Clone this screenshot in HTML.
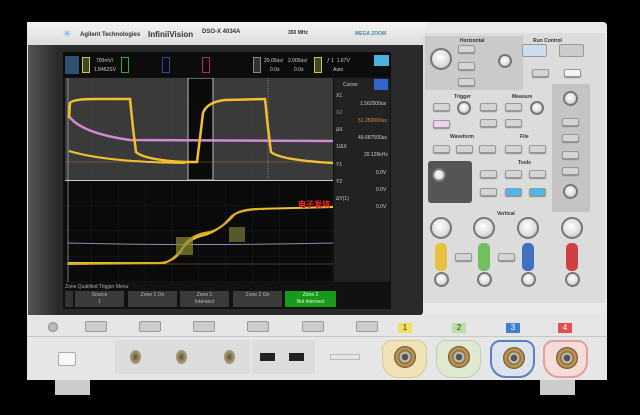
<!DOCTYPE html><html><head><style>
*{margin:0;padding:0;box-sizing:border-box}
body{width:640px;height:415px;background:#000;position:relative;overflow:hidden;font-family:"Liberation Sans",sans-serif}
.a{position:absolute}
.t{font-size:5px;color:#ccc;white-space:nowrap}
.btn{position:absolute;background:#d4d4d4;border:1px solid #999;border-radius:2px;width:17px;height:8px;box-shadow:0 1px 1px #888}
.knob{position:absolute;border-radius:50%;background:radial-gradient(circle at 45% 40%,#fff,#ddd 60%,#999);border:2px solid #777}
.sk{position:absolute;top:291px;height:16px;width:49px;background:#3a3a3a;color:#bbb;font-size:5px;text-align:center;line-height:7px;padding-top:1px}
.ub{position:absolute;top:321px;width:22px;height:11px;background:#ccc;border:1px solid #999;border-radius:2px}
.bnc{position:absolute;top:340px;width:45px;height:38px;border-radius:10px 10px 16px 16px}
.bnc i{position:absolute;left:11px;top:5px;width:22px;height:22px;border-radius:50%;background:radial-gradient(circle,#555 20%,#ddd 25%,#8a6d3b 40%,#c8a060 55%,#6a5020 70%)}
</style></head><body>
<div class="a" style="left:27px;top:22px;width:580px;height:358px;background:#e9e9e9;border-radius:4px"></div>
<div class="a" style="left:27px;top:22px;width:400px;height:23px;background:linear-gradient(#f4f4f4,#dcdcdc)"></div>
<div class="a t" style="left:63px;top:29px;color:#6af;font-size:10px">✳</div>
<div class="a t" style="left:80px;top:32px;color:#333;font-size:6px;font-weight:bold">Agilent Technologies</div>
<div class="a t" style="left:148px;top:30px;color:#333;font-size:8px;font-weight:bold">InfiniiVision</div>
<div class="a t" style="left:202px;top:29px;color:#333;font-size:6px;font-weight:bold">DSO-X 4034A</div>
<div class="a t" style="left:288px;top:30px;color:#333;font-size:5px;font-weight:bold">350 MHz</div>
<div class="a t" style="left:355px;top:31px;color:#48a;font-size:5px;font-weight:bold">MEGA ZOOM</div>
<div class="a" style="left:28px;top:45px;width:395px;height:270px;background:#2a2a2a;border-radius:0 0 3px 3px"></div>
<div class="a" style="left:28px;top:45px;width:30px;height:270px;background:linear-gradient(90deg,#555,#2a2a2a)"></div>
<div class="a" style="left:63px;top:52px;width:328px;height:257px;background:#111"></div>
<div class="a" style="left:63px;top:52px;width:328px;height:25px;background:#0c0c0c"></div>
<div class="a" style="left:65px;top:56px;width:14px;height:18px;background:#2f5070"></div>
<div class="a" style="left:82px;top:57px;width:8px;height:16px;border:1px solid #cc3;background:#443"></div>
<div class="a t" style="left:96px;top:58px">700mV/</div><div class="a t" style="left:94px;top:67px">1.8462SV</div>
<div class="a" style="left:121px;top:57px;width:8px;height:16px;border:1px solid #3a3"></div>
<div class="a" style="left:162px;top:57px;width:8px;height:16px;border:1px solid #34a"></div>
<div class="a" style="left:202px;top:57px;width:8px;height:16px;border:1px solid #a34"></div>
<div class="a" style="left:253px;top:57px;width:8px;height:16px;border:1px solid #888;background:#333"></div>
<div class="a t" style="left:264px;top:58px">20.00us/</div><div class="a t" style="left:270px;top:67px">0.0s</div>
<div class="a t" style="left:288px;top:58px">2.000us/</div><div class="a t" style="left:294px;top:67px">0.0s</div>
<div class="a" style="left:314px;top:57px;width:8px;height:16px;border:1px solid #cc3;background:#443"></div>
<div class="a t" style="left:327px;top:58px">ƒ 1 &nbsp;1.67V</div><div class="a t" style="left:333px;top:67px">Auto</div>
<div class="a" style="left:374px;top:55px;width:15px;height:11px;background:#4ab0e0"></div>
<svg class="a" style="left:65px;top:78px" width="268" height="204">
<defs><pattern id="g" width="26.8" height="25.5" patternUnits="userSpaceOnUse"><path d="M26.8 0V25.5H0" fill="none" stroke="#444" stroke-width=".6" stroke-dasharray="1 1"/></pattern></defs>
<rect width="268" height="102" fill="#3a3a3a"/><rect width="268" height="102" fill="url(#g)"/>
<rect x="123" y="0" width="25" height="102" fill="#0b0b0b" stroke="#bbb"/>
<rect y="103" width="268" height="101" fill="#0a0a0a"/><rect y="103" width="268" height="101" fill="url(#g)"/>
<line x1="0" y1="102.5" x2="268" y2="102.5" stroke="#ccc"/>
<line x1="3" y1="0" x2="3" y2="204" stroke="#ccc" stroke-width=".6"/>
<line x1="0" y1="84" x2="268" y2="84" stroke="#a64" stroke-width=".6"/>
<line x1="0" y1="186" x2="268" y2="186" stroke="#a64" stroke-width=".6"/>
<line x1="203" y1="0" x2="203" y2="102" stroke="#cb8" stroke-width=".5" stroke-dasharray="1 1"/>
<path d="M3 37 Q15 55 65 62 L268 63" stroke="#d08ad0" stroke-width="2.5" fill="none"/>
<path d="M4 40 L5 25 Q8 21 30 21 L65 21 L68 50 L71 74 Q80 82 120 84 L132 84 L135 60 L138 35 Q142 24 160 22 L200 21 L203 50 L206 74 Q215 82 268 85" stroke="#f0c030" stroke-width="2.5" fill="none"/>
<path d="M4 73 Q40 84 120 85" stroke="#f0c030" stroke-width="2" fill="none"/>
<path d="M3 185 L95 185 Q110 184 118 170 Q125 160 140 157 Q155 152 165 140 Q172 132 190 131 L268 129" stroke="#f0c030" stroke-width="2" fill="none"/>
<path d="M3 186 L100 185 Q112 180 120 166 Q128 156 145 154 Q158 150 170 136 Q180 131 200 131" stroke="#d8b028" stroke-width="2" fill="none"/>
<path d="M3 165 Q130 168 268 165" stroke="#a080b0" stroke-width="1" fill="none"/>
<rect x="111" y="159" width="17" height="18" fill="#8a8a30" opacity=".7"/>
<rect x="164" y="149" width="16" height="15" fill="#777740" opacity=".7"/>
</svg>
<div class="a t" style="left:298px;top:199px;color:#f22;font-size:8px;font-weight:bold;font-family:'Noto Sans CJK SC',sans-serif">电子发烧</div>
<div class="a" style="left:334px;top:78px;width:56px;height:204px;background:#222"></div>
<div class="a t" style="left:343px;top:82px">Cursor</div>
<div class="a" style="left:374px;top:79px;width:14px;height:11px;background:#36c"></div>
<div class="a t" style="left:336px;top:93px">X1</div><div class="a t" style="left:360px;top:101px">1.562500us</div>
<div class="a t" style="left:336px;top:110px;color:#d84">X2</div><div class="a t" style="left:358px;top:118px;color:#d84">51.250000us</div>
<div class="a t" style="left:336px;top:127px">ΔX</div><div class="a t" style="left:358px;top:135px">49.687500us</div>
<div class="a t" style="left:336px;top:144px">1/ΔX</div><div class="a t" style="left:364px;top:152px">20.126kHz</div>
<div class="a t" style="left:336px;top:162px">Y1</div><div class="a t" style="left:376px;top:170px">0.0V</div>
<div class="a t" style="left:336px;top:179px">Y2</div><div class="a t" style="left:376px;top:187px">0.0V</div>
<div class="a t" style="left:336px;top:196px">ΔY(1)</div><div class="a t" style="left:376px;top:204px">0.0V</div>
<div class="a t" style="left:65px;top:284px;color:#aaa">Zone Qualified Trigger Menu</div>
<div class="a" style="left:65px;top:291px;width:8px;height:16px;background:#333"></div>
<div class="sk" style="left:75px">Source<br>1</div>
<div class="sk" style="left:128px">Zone 1 On</div>
<div class="sk" style="left:180px">Zone 1<br>Intersect</div>
<div class="sk" style="left:233px">Zone 2 On</div>
<div class="sk" style="left:285px;width:51px;background:#1a9a1a;color:#dfd">Zone 2<br>Not intersect</div>
<div class="a" style="left:423px;top:33px;width:182px;height:270px;background:#dcdcdc;border-radius:3px"></div>
<div class="a" style="left:425px;top:36px;width:98px;height:54px;background:#cacaca"></div>
<div class="a" style="left:552px;top:84px;width:38px;height:128px;background:#c4c4c4"></div>
<div class="a" style="left:428px;top:161px;width:44px;height:42px;background:#555;border-radius:3px"></div>
<div class="a t" style="left:460px;top:38px;color:#333;font-weight:bold">Horizontal</div>
<div class="a t" style="left:533px;top:38px;color:#333;font-weight:bold">Run Control</div>
<div class="a t" style="left:454px;top:94px;color:#333;font-weight:bold">Trigger</div>
<div class="a t" style="left:512px;top:94px;color:#333;font-weight:bold">Measure</div>
<div class="a t" style="left:450px;top:134px;color:#333;font-weight:bold">Waveform</div>
<div class="a t" style="left:520px;top:134px;color:#333;font-weight:bold">File</div>
<div class="a t" style="left:518px;top:160px;color:#333;font-weight:bold">Tools</div>
<div class="a t" style="left:497px;top:211px;color:#333;font-weight:bold">Vertical</div>
<div class="knob" style="left:430px;top:48px;width:22px;height:22px"></div>
<div class="knob" style="left:498px;top:54px;width:14px;height:14px"></div>
<div class="knob" style="left:457px;top:101px;width:14px;height:14px"></div>
<div class="knob" style="left:530px;top:101px;width:14px;height:14px"></div>
<div class="knob" style="left:563px;top:91px;width:15px;height:15px"></div>
<div class="knob" style="left:563px;top:184px;width:15px;height:15px"></div>
<div class="knob" style="left:432px;top:168px;width:14px;height:14px"></div>
<div class="a" style="left:522px;top:44px;width:25px;height:13px;background:#cde;border:1px solid #999;border-radius:2px"></div>
<div class="a" style="left:559px;top:44px;width:25px;height:13px;background:#ccc;border:1px solid #999;border-radius:2px"></div>
<div class="btn" style="left:458px;top:45px"></div><div class="btn" style="left:458px;top:62px"></div><div class="btn" style="left:458px;top:78px"></div>
<div class="btn" style="left:532px;top:69px"></div><div class="btn" style="left:564px;top:69px;background:#f4f4f4"></div>
<div class="btn" style="left:433px;top:103px"></div><div class="btn" style="left:480px;top:103px"></div>
<div class="btn" style="left:433px;top:120px;background:#f0d0f0"></div><div class="btn" style="left:480px;top:119px"></div>
<div class="btn" style="left:505px;top:103px"></div><div class="btn" style="left:505px;top:119px"></div>
<div class="btn" style="left:433px;top:145px"></div><div class="btn" style="left:456px;top:145px"></div><div class="btn" style="left:479px;top:145px"></div>
<div class="btn" style="left:505px;top:145px"></div><div class="btn" style="left:529px;top:145px"></div>
<div class="btn" style="left:480px;top:170px"></div><div class="btn" style="left:480px;top:188px"></div>
<div class="btn" style="left:505px;top:170px"></div><div class="btn" style="left:529px;top:170px"></div>
<div class="btn" style="left:505px;top:188px;background:#4ab8f0"></div><div class="btn" style="left:529px;top:188px;background:#4ab8f0"></div>
<div class="btn" style="left:562px;top:118px"></div><div class="btn" style="left:562px;top:134px"></div><div class="btn" style="left:562px;top:151px"></div><div class="btn" style="left:562px;top:167px"></div>
<div class="knob" style="left:430px;top:217px;width:22px;height:22px"></div>
<div class="knob" style="left:473px;top:217px;width:22px;height:22px"></div>
<div class="knob" style="left:517px;top:217px;width:22px;height:22px"></div>
<div class="knob" style="left:561px;top:217px;width:22px;height:22px"></div>
<div class="a" style="left:435px;top:243px;width:12px;height:28px;background:#e8c040;border-radius:5px"></div>
<div class="a" style="left:478px;top:243px;width:12px;height:28px;background:#70c060;border-radius:5px"></div>
<div class="a" style="left:522px;top:243px;width:12px;height:28px;background:#4070c0;border-radius:5px"></div>
<div class="a" style="left:566px;top:243px;width:12px;height:28px;background:#d04040;border-radius:5px"></div>
<div class="btn" style="left:455px;top:253px"></div><div class="btn" style="left:498px;top:253px"></div>
<div class="knob" style="left:434px;top:272px;width:15px;height:15px"></div>
<div class="knob" style="left:477px;top:272px;width:15px;height:15px"></div>
<div class="knob" style="left:521px;top:272px;width:15px;height:15px"></div>
<div class="knob" style="left:565px;top:272px;width:15px;height:15px"></div>
<div class="a" style="left:27px;top:315px;width:580px;height:65px;background:#e6e6e6"></div>
<div class="a" style="left:27px;top:336px;width:580px;height:1px;background:#c8c8c8"></div>
<div class="a" style="left:48px;top:322px;width:10px;height:10px;border-radius:50%;background:#bbb;border:1px solid #888"></div>
<div class="ub" style="left:85px"></div><div class="ub" style="left:139px"></div><div class="ub" style="left:193px"></div><div class="ub" style="left:247px"></div><div class="ub" style="left:302px"></div><div class="ub" style="left:356px"></div>
<div class="a" style="left:58px;top:352px;width:18px;height:14px;background:#f6f6f6;border:1px solid #aaa;border-radius:2px"></div>
<div class="a" style="left:115px;top:340px;width:135px;height:34px;background:#dcdcdc"></div>
<div class="a" style="left:252px;top:340px;width:63px;height:34px;background:#dcdcdc"></div>
<div class="a" style="left:130px;top:350px;width:11px;height:14px;border-radius:50%;background:radial-gradient(#553,#b09870 60%,#777)"></div>
<div class="a" style="left:176px;top:350px;width:11px;height:14px;border-radius:50%;background:radial-gradient(#553,#b09870 60%,#777)"></div>
<div class="a" style="left:224px;top:350px;width:11px;height:14px;border-radius:50%;background:radial-gradient(#553,#b09870 60%,#777)"></div>
<div class="a" style="left:260px;top:353px;width:15px;height:8px;background:#222"></div>
<div class="a" style="left:289px;top:353px;width:15px;height:8px;background:#222"></div>
<div class="a" style="left:330px;top:354px;width:30px;height:6px;border:1px solid #bbb"></div>
<div class="bnc" style="left:382px;background:#f0e2b8;border:1px solid #ddc890"><i></i></div>
<div class="bnc" style="left:436px;background:#dfe8d0;border:1px solid #c0d0b0"><i></i></div>
<div class="bnc" style="left:490px;background:#dde4ee;border:2px solid #5a80c0"><i></i></div>
<div class="bnc" style="left:543px;background:#f4dcd8;border:2px solid #e0a0a0"><i></i></div>
<div class="a t" style="left:398px;top:323px;width:14px;height:10px;background:#f0e060;color:#333;font-size:8px;text-align:center;line-height:10px">1</div>
<div class="a t" style="left:452px;top:323px;width:14px;height:10px;background:#b8e0a0;color:#333;font-size:8px;text-align:center;line-height:10px">2</div>
<div class="a t" style="left:506px;top:323px;width:14px;height:10px;background:#4080d0;color:#fff;font-size:8px;text-align:center;line-height:10px">3</div>
<div class="a t" style="left:558px;top:323px;width:14px;height:10px;background:#e05050;color:#fff;font-size:8px;text-align:center;line-height:10px">4</div>
<div class="a" style="left:55px;top:380px;width:35px;height:15px;background:#ccc"></div>
<div class="a" style="left:540px;top:380px;width:35px;height:15px;background:#ccc"></div>
</body></html>
